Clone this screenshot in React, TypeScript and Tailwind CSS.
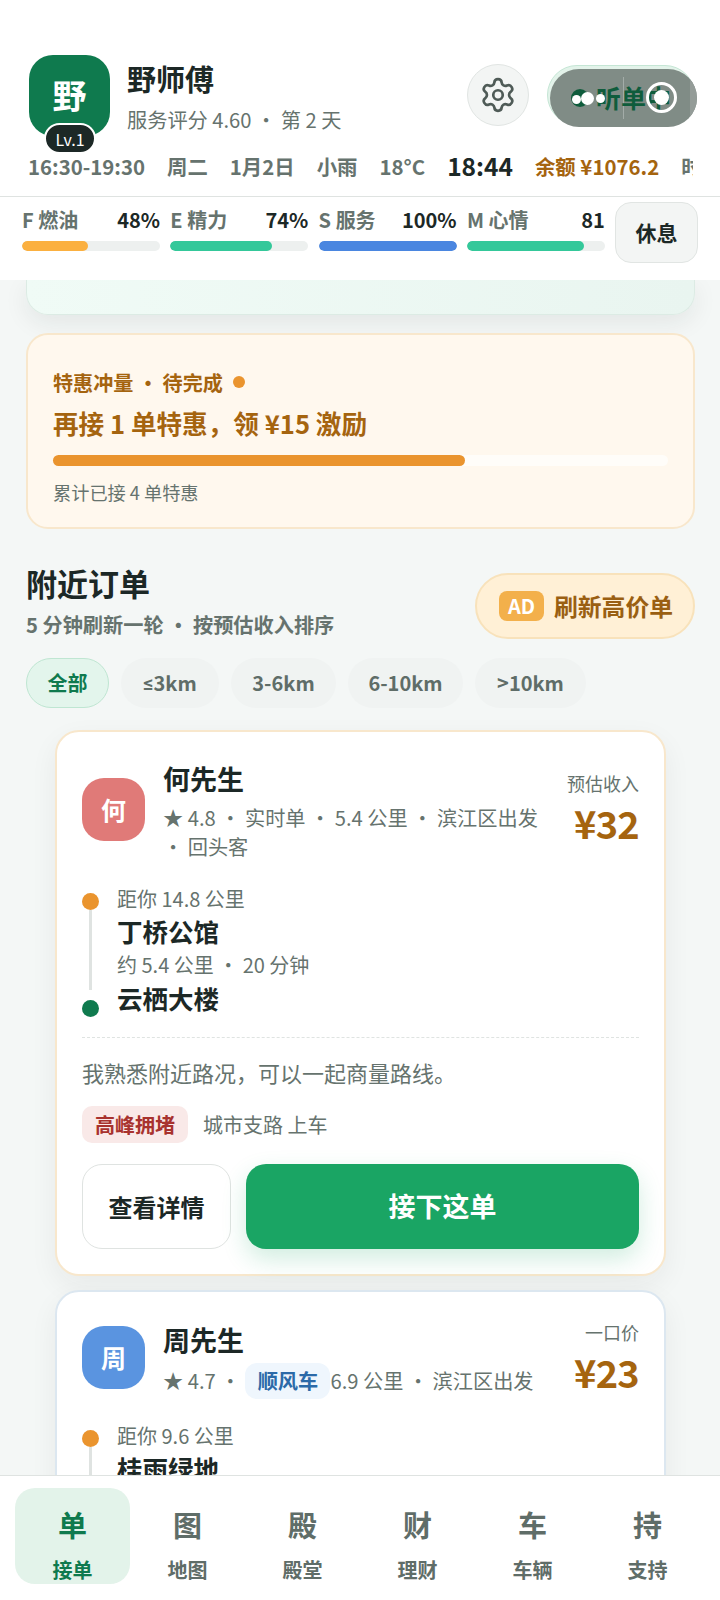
import { Settings } from "lucide-react";

const Stat = ({ k, name, v, pct, color }: { k: string; name: string; v: string; pct: string; color: string }) => (
  <div className="w-[138px]">
    <div className="flex items-center justify-between h-[30px] text-[20px] leading-[30px] font-semibold">
      <span className="text-[#66736e]">{k} {name}</span>
      <span className="text-[#1c2826]">{v}</span>
    </div>
    <div className="mt-[6px] h-[10px] rounded-full bg-[#edf0ef] overflow-hidden">
      <div className={`h-full rounded-full ${color} ${pct}`} />
    </div>
  </div>
);

const Route = ({ top, a, mid, b }: { top: string; a: string; mid: string; b: string }) => (
  <div className="relative pl-[35px]">
    <div className="absolute left-0 top-[9px] w-[17px] h-[17px] rounded-full bg-[#ea942e]" />
    <div className="absolute left-[7px] top-[26px] w-[3px] h-[80px] bg-[#dfe3e1]" />
    <div className="absolute left-0 top-[116px] w-[17px] h-[17px] rounded-full bg-[#0f7a4e]" />
    <div className="text-[20px] leading-[29px] text-[#66736e]">{top}</div>
    <div className="text-[25.5px] leading-[36px] font-bold text-[#1c2826]">{a}</div>
    <div className="text-[20px] leading-[31px] text-[#66736e]">{mid}</div>
    <div className="text-[25.5px] leading-[36px] font-bold text-[#1c2826]">{b}</div>
  </div>
);

const Nav = ({ g, l, active }: { g: string; l: string; active?: boolean }) => (
  <div className={`flex-1 h-[96px] rounded-[20px] flex flex-col items-center font-bold ${active ? "bg-[#e3f3ea] text-[#0f7a4e]" : "text-[#5f6d68]"}`}>
    <div className="mt-[15px] text-[29px] leading-[42px]">{g}</div>
    <div className="mt-[11px] text-[20px] leading-[28px] font-semibold">{l}</div>
  </div>
);

export default function App() {
  return (
    <div className="w-[720px] h-[1600px] overflow-hidden flex flex-col bg-[#f4f7f6] font-['Noto_Sans_CJK_SC','Noto_Sans',sans-serif]">
      <header className="relative z-10 bg-white shrink-0 h-[280px]">
        <div className="flex items-start pt-[55px] pl-[29px] pr-[25px] h-[143px]">
          <div className="relative w-[81px] h-[81px] rounded-[24px] bg-[#0f7a4e] flex items-center justify-center text-white text-[34px] font-bold">
            <span className="mt-[-2px]">野</span>
            <div className="absolute left-[15px] top-[68px] w-[52px] h-[31px] rounded-full bg-[#1c2826] border-2 border-white flex items-center justify-center text-[16px] font-normal">Lv.1</div>
          </div>
          <div className="ml-[17px] flex-1">
            <div className="text-[29px] leading-[40px] font-bold text-[#1c2826] mt-[3px]">野师傅</div>
            <div className="text-[20.2px] leading-[30px] text-[#66736e] mt-[7px]">服务评分 4.60 ・ 第 2 天</div>
          </div>
          <div className="mt-[9px] w-[62px] h-[62px] rounded-full bg-[#f3f5f4] border border-[#e1e5e3] flex items-center justify-center">
            <Settings size={38} strokeWidth={1.7} className="text-[#4f5b57]" />
          </div>
          <div className="relative ml-[18px] mt-[10px] w-[148px] h-[60px] rounded-full bg-[#e3f3ea] border border-[#c5e6d5]">
            <div className="absolute left-[2px] top-[3px] w-[147px] h-[58px] rounded-full bg-[#808c86] overflow-hidden">
              <div className="absolute right-0 top-0 bottom-0 w-[7px] bg-[#949c98]" />
              <div className="absolute left-[73px] top-[8px] w-[1px] h-[42px] bg-[#a3aca8]" />
            </div>
            <div className="absolute left-[48px] top-[2px] text-[25px] leading-[58px] font-bold text-[#0f5c3c] whitespace-nowrap">听单中</div>
            <div className="absolute left-[23px] top-[23px] w-[18px] h-[18px] rounded-full bg-[#0f5c3c]" />
            <div className="absolute left-[24px] top-[29px] w-[9px] h-[9px] rounded-full bg-white" />
            <div className="absolute left-[33px] top-[26px] w-[13px] h-[13px] rounded-full bg-white" />
            <div className="absolute left-[48px] top-[28px] w-[9px] h-[9px] rounded-full bg-white" />
            <div className="absolute left-[98px] top-[16px] w-[31px] h-[31px] rounded-full border-[3px] border-white" />
            <div className="absolute left-[106px] top-[24px] w-[15px] h-[15px] rounded-full bg-white" />
          </div>
        </div>
        <div className="flex items-center gap-[22px] h-[46px] mb-[7px] ml-[28px] w-[665px] overflow-hidden whitespace-nowrap text-[20.4px] font-semibold text-[#66736e]">
          <span>16:30-19:30</span>
          <span>周二</span>
          <span>1月2日</span>
          <span>小雨</span>
          <span>18°C</span>
          <span className="text-[24.5px] font-semibold text-[#1c2826]">18:44</span>
          <span className="text-[#a5640f]">余额 ¥1076.2</span>
          <span>时段</span>
        </div>
        <div className="border-t border-[#dfe3e1] flex items-start pl-[22px] pr-[22px] gap-[10px] h-[84px]">
          <div className="flex gap-[10.3px] pt-[8px]">
            <Stat k="F" name="燃油" v="48%" pct="w-[48%]" color="bg-[#fbb040]" />
            <Stat k="E" name="精力" v="74%" pct="w-[74%]" color="bg-[#34c89a]" />
            <Stat k="S" name="服务" v="100%" pct="w-full" color="bg-[#4a86e0]" />
            <Stat k="M" name="心情" v="81" pct="w-[85%]" color="bg-[#34c89a]" />
          </div>
          <div className="mt-[5px] ml-auto w-[83px] h-[61px] rounded-[16px] bg-[#f3f5f4] border border-[#e1e5e3] flex items-center justify-center text-[21px] font-semibold text-[#1c2826]">休息</div>
        </div>
      </header>

      <main className="h-[1195px] shrink-0 overflow-hidden pl-[26px] pr-[25px]">
        <div className="h-[35px] rounded-b-[22px] border-x border-b border-[#dcebe4] bg-gradient-to-r from-[#f0fbf6] to-[#e9f5f0] shadow-[0_8px_24px_rgba(28,40,38,0.08)]" />

        <section className="mt-[18px] h-[196px] rounded-[22px] border-2 border-[#f8e7cc] bg-[#fff8ee] px-[25px] pt-[33px]">
          <div className="flex items-center text-[20.1px] leading-[30px] font-semibold text-[#a5640f]">
            特惠冲量 ・ 待完成
            <span className="ml-[10px] mt-[-3px] w-[12px] h-[12px] rounded-full bg-[#ea942e]" />
          </div>
          <div className="mt-[5px] text-[25.6px] leading-[40px] font-bold text-[#a5640f]">再接 1 单特惠，领 ¥15 激励</div>
          <div className="mt-[12px] h-[11px] rounded-full bg-[#fffdf9]">
            <div className="h-full w-[67%] rounded-full bg-[#ea942e]" />
          </div>
          <div className="mt-[12px] text-[18.2px] leading-[28px] text-[#66736e]">累计已接 4 单特惠</div>
        </section>

        <div className="mt-[44px] flex items-start justify-between">
          <div>
            <div className="text-[31px] leading-[46px] font-bold text-[#1c2826] mt-[-13px]">附近订单</div>
            <div className="mt-[4px] text-[20.2px] leading-[30px] font-semibold text-[#66736e]">5 分钟刷新一轮 ・ 按预估收入排序</div>
          </div>
          <div className="w-[220px] h-[66px] rounded-full bg-[#fff0d6] border-2 border-[#f8e2bb] flex items-center pl-[22px]">
            <span className="w-[45px] h-[30px] rounded-[8px] bg-[#f3b04b] text-white text-[20px] font-semibold flex items-center justify-center">AD</span>
            <span className="ml-[10px] text-[23.8px] font-bold text-[#9a5f12]">刷新高价单</span>
          </div>
        </div>

        <div className="mt-[18px] flex gap-[12px] text-[20px] font-semibold text-[#5f6d68]">
          <div className="w-[83px] h-[50px] rounded-full bg-[#e3f5ec] border border-[#bfe6d2] text-[#0f7a4e] flex items-center justify-center">全部</div>
          <div className="w-[98px] h-[50px] rounded-full bg-[#f0f3f2] flex items-center justify-center"><span className="font-['Roboto']">≤</span>3km</div>
          <div className="w-[105px] h-[50px] rounded-full bg-[#f0f3f2] flex items-center justify-center">3-6km</div>
          <div className="w-[115px] h-[50px] rounded-full bg-[#f0f3f2] flex items-center justify-center">6-10km</div>
          <div className="w-[111px] h-[50px] rounded-full bg-[#f0f3f2] flex items-center justify-center">&gt;10km</div>
        </div>

        <article className="mt-[22px] ml-[29px] mr-[29px] h-[546px] rounded-[24px] border-2 border-[#f8e7cc] bg-white px-[25px] shadow-[0_10px_28px_rgba(28,40,38,0.06)]">
          <div className="flex items-start h-[152px]">
            <div className="mt-[46px] w-[63px] h-[63px] rounded-[22px] bg-[#e07a78] text-white text-[25px] font-bold flex items-center justify-center shrink-0">何</div>
            <div className="ml-[18px] flex-1 min-w-0">
              <div className="mt-[27px] text-[27px] leading-[40px] font-bold text-[#1c2826]">何先生</div>
              <div className="mt-[4px] w-[380px] text-[20.2px] leading-[29px] text-[#66736e]">★ 4.8 ・ 实时单 ・ 5.4 公里 ・ 滨江区出发 ・ 回头客</div>
            </div>
            <div className="text-right shrink-0">
              <div className="mt-[37px] text-[18px] leading-[28px] text-[#66736e]">预估收入</div>
              <div className="mt-[-2px] text-[38px] leading-[56px] font-bold tracking-[-0.76px] text-[#a5640f]">¥32</div>
            </div>
          </div>
          <Route top="距你 14.8 公里" a="丁桥公馆" mid="约 5.4 公里 ・ 20 分钟" b="云栖大楼" />
          <div className="mt-[21px] border-t border-dashed border-[#dfe3e1]" />
          <div className="mt-[16px] text-[22px] leading-[36px] text-[#66736e]">我熟悉附近路况，可以一起商量路线。</div>
          <div className="mt-[16px] flex items-center">
            <span className="w-[106px] h-[37px] rounded-[10px] bg-[#f9e9e8] text-[20px] font-semibold text-[#a8322e] flex items-center justify-center">高峰拥堵</span>
            <span className="ml-[15px] text-[20px] text-[#66736e]">城市支路 上车</span>
          </div>
          <div className="mt-[21px] flex gap-[15px]">
            <div className="w-[149px] h-[85px] rounded-[20px] border border-[#dfe3e1] bg-white text-[24px] font-bold text-[#1c2826] flex items-center justify-center">查看详情</div>
            <div className="flex-1 h-[85px] rounded-[20px] bg-[#1aa564] text-white text-[27px] font-bold flex items-center justify-center shadow-[0_10px_24px_rgba(26,165,100,0.2)]">接下这单</div>
          </div>
        </article>

        <article className="mt-[14px] ml-[29px] mr-[29px] h-[400px] rounded-[24px] border-2 border-[#dce7f0] bg-white px-[25px] shadow-[0_10px_28px_rgba(28,40,38,0.06)]">
          <div className="flex items-start h-[129px]">
            <div className="mt-[34px] w-[63px] h-[63px] rounded-[22px] bg-[#5a94e0] text-white text-[25px] font-bold flex items-center justify-center shrink-0">周</div>
            <div className="ml-[18px] flex-1 min-w-0">
              <div className="mt-[28px] text-[27px] leading-[40px] font-bold text-[#1c2826]">周先生</div>
              <div className="mt-[3px] flex items-center whitespace-nowrap text-[20.2px] leading-[36px] text-[#66736e]">
                ★ 4.7 ・
                <span className="ml-[5px] w-[85px] h-[36px] rounded-[12px] bg-[#eff6fd] text-[#2c6aa8] font-semibold flex items-center justify-center">顺风车</span>
                6.9 公里 ・ 滨江区出发
              </div>
            </div>
            <div className="text-right shrink-0">
              <div className="mt-[26px] text-[18px] leading-[28px] text-[#66736e]">一口价</div>
              <div className="mt-[-2px] text-[38px] leading-[56px] font-bold tracking-[-0.76px] text-[#a5640f]">¥23</div>
            </div>
          </div>
          <Route top="距你 9.6 公里" a="桂雨绿地" mid="约 6.9 公里 ・ 24 分钟" b="云栖大楼" />
        </article>
      </main>

      <nav className="relative z-10 shrink-0 h-[125px] bg-white border-t border-[#dfe3e1] flex px-[15px] pt-[12px]">
        <Nav g="单" l="接单" active />
        <Nav g="图" l="地图" />
        <Nav g="殿" l="殿堂" />
        <Nav g="财" l="理财" />
        <Nav g="车" l="车辆" />
        <Nav g="持" l="支持" />
      </nav>
    </div>
  );
}
